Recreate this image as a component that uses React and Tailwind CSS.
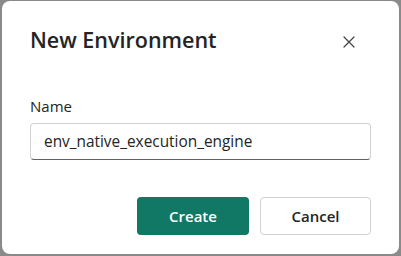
export default function App() {
  return (
    <div className="w-[401px] h-[256px] bg-[#8a8a8a] pt-[1px] pl-[2px] pr-[2px] pb-[2px]" style={{ fontFamily: '"Open Sans", sans-serif' }}>
      <div className="w-full h-full bg-white rounded-[8px] flex flex-col pl-[28px] pr-[28px] pt-[23px]">
        {/* Header */}
        <div className="flex items-center justify-between h-[32px]">
          <h2 className="text-[21.5px] font-semibold text-[#242424] leading-none">New Environment</h2>
          <svg width="12" height="12" viewBox="0 0 12 12" className="mr-[16px] mt-[4px]">
            <path d="M1 1 L11 11 M11 1 L1 11" stroke="#424242" strokeWidth="1.2" strokeLinecap="round" />
          </svg>
        </div>

        {/* Field */}
        <label className="mt-[40px] text-[15px] text-[#242424] leading-[20px]">Name</label>
        <div className="mt-[7px] h-[37px] rounded-[4px] border border-[#d1d1d1] border-b-[#616161] flex items-center px-[13px]">
          <span className="text-[15.4px] text-[#242424]">env_native_execution_engine</span>
        </div>

        {/* Actions */}
        <div className="mt-[37px] flex justify-end gap-[11px]">
          <button className="w-[112px] h-[38px] rounded-[4px] bg-[#117865] text-white text-[15px] font-semibold">Create</button>
          <button className="w-[111px] h-[38px] rounded-[4px] bg-white border border-[#d1d1d1] text-[#242424] text-[15px] font-semibold">Cancel</button>
        </div>
      </div>
    </div>
  );
}
